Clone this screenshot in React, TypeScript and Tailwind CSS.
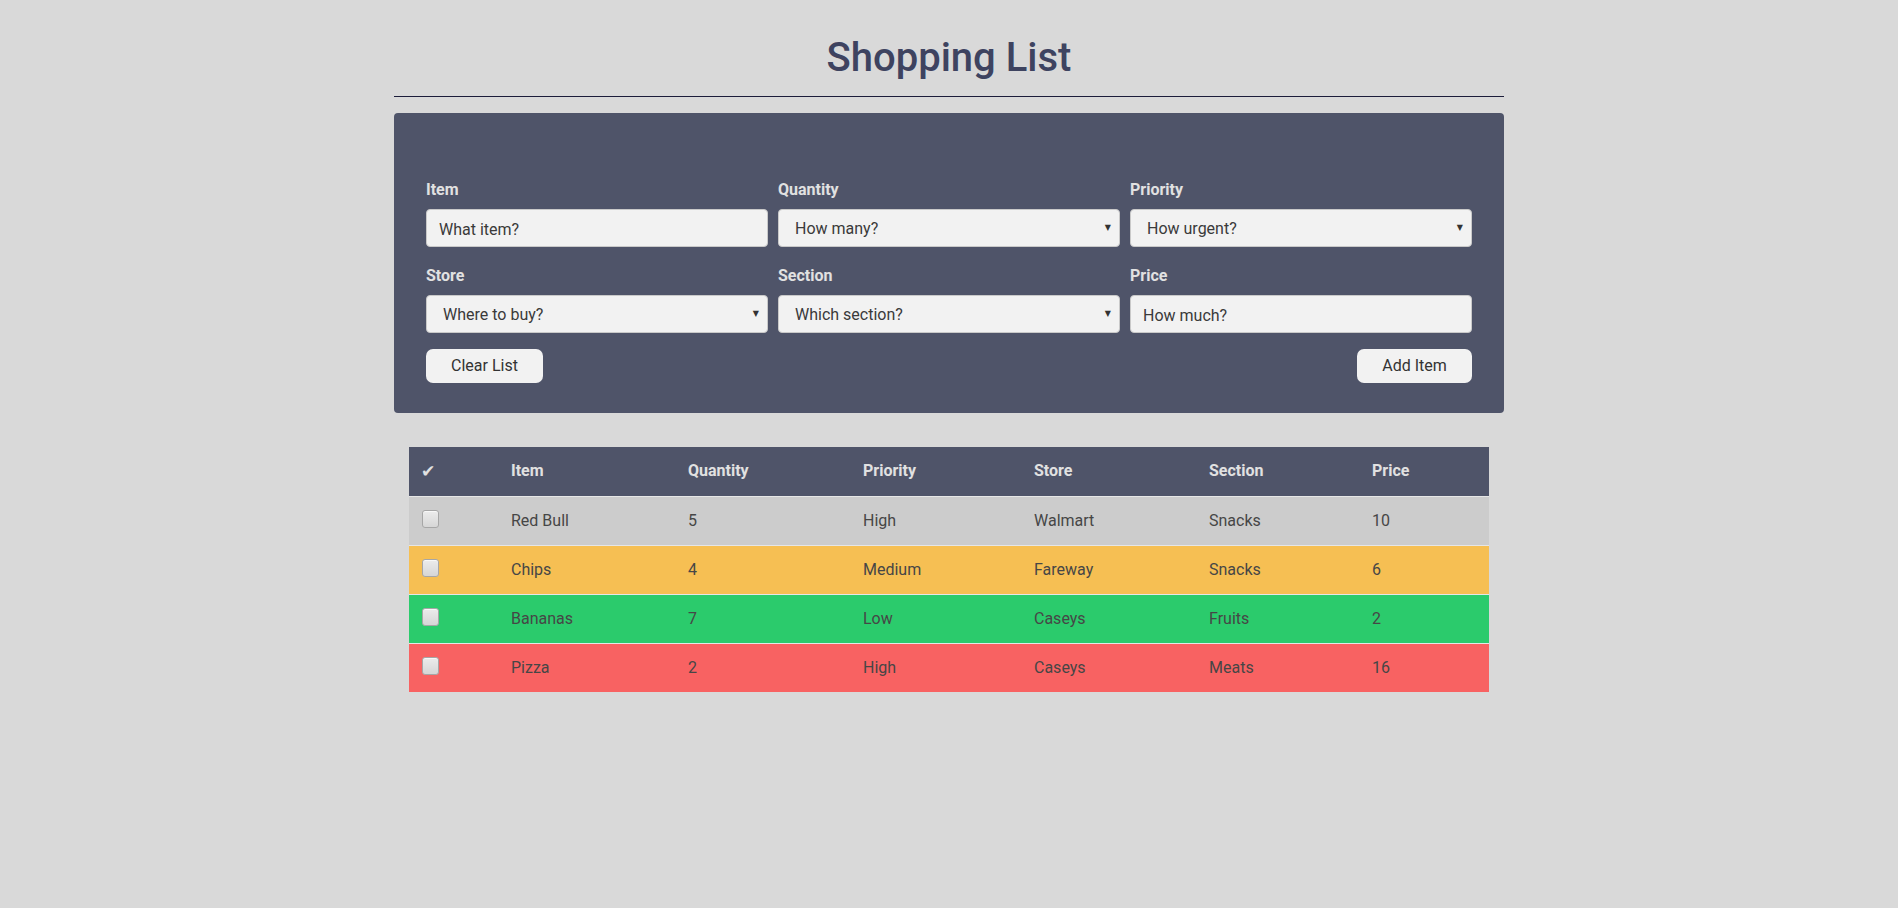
import React from "react";

const rows = [
  { item: "Red Bull", quantity: "5", priority: "High", store: "Walmart", section: "Snacks", price: "10", color: "bg-[#cccccc]" },
  { item: "Chips", quantity: "4", priority: "Medium", store: "Fareway", section: "Snacks", price: "6", color: "bg-[#f6bf53]" },
  { item: "Bananas", quantity: "7", priority: "Low", store: "Caseys", section: "Fruits", price: "2", color: "bg-[#2bcb6c]" },
  { item: "Pizza", quantity: "2", priority: "High", store: "Caseys", section: "Meats", price: "16", color: "bg-[#f86262]" },
];

const columns = [
  { label: "Item", width: "w-[177px]" },
  { label: "Quantity", width: "w-[175px]" },
  { label: "Priority", width: "w-[171px]" },
  { label: "Store", width: "w-[175px]" },
  { label: "Section", width: "w-[163px]" },
  { label: "Price", width: "w-[129px]" },
];

const Label = ({ children }: { children: React.ReactNode }) => (
  <label className="block text-[16px] leading-[19px] font-bold text-[#e1e1e1] mb-[10px]">
    {children}
  </label>
);

const TextField = ({ label, placeholder }: { label: string; placeholder: string }) => (
  <div>
    <Label>{label}</Label>
    <input
      type="text"
      placeholder={placeholder}
      className="block w-full h-[38px] rounded-[4px] border border-[#c9c9c9] bg-[#f2f2f2] px-[12px] pt-[2px] text-[16px] text-[#333] placeholder:text-[#3a3a3a] outline-none"
    />
  </div>
);

const SelectField = ({ label, placeholder }: { label: string; placeholder: string }) => (
  <div>
    <Label>{label}</Label>
    <div className="relative">
      <select className="block w-full h-[38px] appearance-none rounded-[4px] border border-[#c9c9c9] bg-[#f2f2f2] pl-[16px] pr-[24px] pt-[2px] text-[16px] text-[#3a3a3a] outline-none">
        <option>{placeholder}</option>
      </select>
      <span className="pointer-events-none absolute right-[9px] top-1/2 -translate-y-1/2 text-[8px] leading-none text-[#333] font-['DejaVu_Sans',sans-serif]">
        ▼
      </span>
    </div>
  </div>
);

const Checkbox = () => (
  <span className="block w-[17px] h-[18px] mb-[4px] rounded-[3px] border border-[#a6a6a6] bg-gradient-to-b from-[#ececec] to-[#d6d6d6] shadow-[inset_0_1px_0_#f8f8f8]" />
);

const App = () => {
  return (
    <div className="min-h-screen bg-[#d9d9d9] font-['Roboto','Liberation_Sans',sans-serif] pb-10">
      <div className="w-[1110px] mx-auto">
        <h1 className="pt-[34px] text-center text-[40px] leading-[48px] font-medium text-[#3e4360]">
          Shopping List
        </h1>
        <hr className="mt-[14px] border-0 border-t border-[#1c1d3a]" />

        <div className="mt-[16px] rounded-[4px] bg-[#4f5469] pt-[67px] px-[32px] pb-[30px]">
          <div className="grid grid-cols-3 gap-x-[10px] gap-y-[19px]">
            <TextField label="Item" placeholder="What item?" />
            <SelectField label="Quantity" placeholder="How many?" />
            <SelectField label="Priority" placeholder="How urgent?" />
            <SelectField label="Store" placeholder="Where to buy?" />
            <SelectField label="Section" placeholder="Which section?" />
            <TextField label="Price" placeholder="How much?" />
          </div>
          <div className="mt-[16px] flex justify-between">
            <button className="w-[117px] h-[34px] rounded-[7px] bg-[#f2f2f2] text-[16px] text-[#333]">
              Clear List
            </button>
            <button className="w-[115px] h-[34px] rounded-[7px] bg-[#f2f2f2] text-[16px] text-[#333]">
              Add Item
            </button>
          </div>
        </div>

        <table className="mt-[34px] mx-auto w-[1080px] table-fixed border-collapse text-[16px]">
          <thead>
            <tr className="bg-[#4f5469] h-[49px]">
              <th className="w-[90px] pl-[12px] text-left font-bold text-[#e1e1e1] font-['DejaVu_Sans',sans-serif] text-[17px]">
                ✔
              </th>
              {columns.map((col) => (
                <th key={col.label} className={`${col.width} pl-[12px] text-left font-bold text-[#e1e1e1]`}>
                  {col.label}
                </th>
              ))}
            </tr>
          </thead>
          <tbody>
            {rows.map((row) => (
              <tr key={row.item} className={`${row.color} h-[49px] border-t border-[#e6e6e6] text-[#464646]`}>
                <td className="pl-[13px] align-middle">
                  <Checkbox />
                </td>
                <td className="pl-[12px]">{row.item}</td>
                <td className="pl-[12px]">{row.quantity}</td>
                <td className="pl-[12px]">{row.priority}</td>
                <td className="pl-[12px]">{row.store}</td>
                <td className="pl-[12px]">{row.section}</td>
                <td className="pl-[12px]">{row.price}</td>
              </tr>
            ))}
          </tbody>
        </table>
      </div>
    </div>
  );
};

export default App;
